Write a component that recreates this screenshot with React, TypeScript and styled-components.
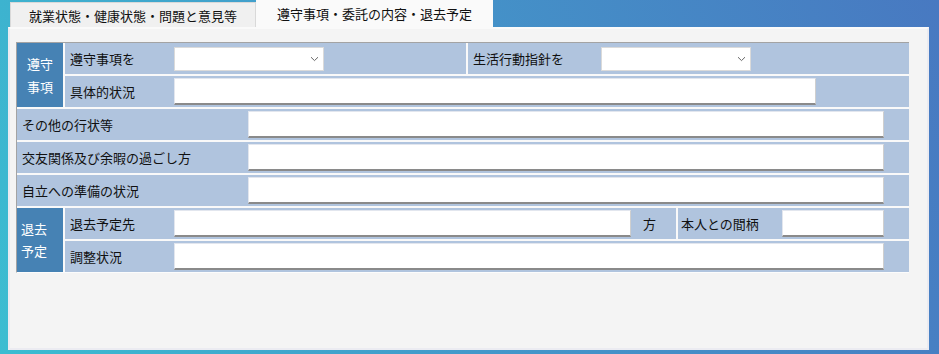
import React from "react";
import styled, { createGlobalStyle } from "styled-components";

const GlobalStyle = createGlobalStyle`
  html, body {
    margin: 0;
    padding: 0;
  }
  body {
    font-family: "Noto Sans CJK JP", "Noto Sans", sans-serif;
    font-size: 13px;
    color: #111;
  }
`;

const Page = styled("div")`
  width: 939px;
  height: 354px;
  overflow: hidden;
  background: linear-gradient(70deg, #3bbdd1 0%, #4398ca 45%, #4879c1 100%);
  display: flex;
  flex-direction: column;
`;

const TabBar = styled("div")`
  display: flex;
  align-items: flex-end;
  height: 27px;
  padding-left: 10px;
`;

const Tab = styled("div")<{ $active?: boolean }>`
  box-sizing: border-box;
  height: ${(p) => (p.$active ? 27 : 25)}px;
  padding: 0 ${(p) => (p.$active ? 20 : 18)}px;
  display: flex;
  align-items: center;
  line-height: 1;
  padding-bottom: ${(p) => (p.$active ? 2 : 0)}px;
  background: ${(p) => (p.$active ? "#fafafa" : "#f0f0f0")};
  border: 1px solid ${(p) => (p.$active ? "#fafafa" : "#d9d9d9")};
  border-bottom: none;
  color: #111;
  white-space: nowrap;
`;

const Panel = styled("div")`
  box-sizing: border-box;
  margin-left: 8px;
  width: 921px;
  height: 323px;
  background: #f4f4f4;
  border: 2px solid #ebebf1;
  border-top-color: #fafafa;
  padding: 13px 0 0 6px;
`;

const Form = styled("div")`
  width: 893px;
  display: flex;
  flex-direction: column;
  gap: 2px;
  background: #f9f9f9;
  border-top: 1px solid #a3a3a3;
  border-left: 1px solid #a3a3a3;
  border-bottom: 1px solid #fcfcfc;
  box-sizing: border-box;
`;

const Group = styled("div")`
  display: grid;
  grid-template-columns: 46px 1fr;
  grid-template-rows: 31px 31px;
  gap: 2px;
`;

const Side = styled("div")<{ $align: "center" | "left"; $lh: number }>`
  grid-row: span 2;
  background: #4682b4;
  color: #fff;
  display: flex;
  flex-direction: column;
  justify-content: center;
  align-items: ${(p) => (p.$align === "center" ? "center" : "flex-start")};
  padding-left: ${(p) => (p.$align === "center" ? 0 : 4)}px;
  line-height: ${(p) => p.$lh}px;
  padding-bottom: 1px;
`;

const Row = styled("div")`
  display: flex;
  gap: 2px;
  height: 31px;
`;

const Cell = styled("div")<{ $w?: number; $pl?: number }>`
  box-sizing: border-box;
  ${(p) => (p.$w ? `width: ${p.$w}px; flex: none;` : "flex: 1;")}
  background: #b0c4de;
  display: flex;
  align-items: center;
  padding-left: ${(p) => p.$pl ?? 5}px;
`;

const Label = styled("span")<{ $w?: number }>`
  flex: none;
  width: ${(p) => (p.$w ? `${p.$w}px` : "auto")};
  white-space: nowrap;
  line-height: 1;
  padding-bottom: 1px;
`;

const TextBox = styled("div")<{ $w: number }>`
  box-sizing: border-box;
  width: ${(p) => p.$w}px;
  height: 27px;
  background: #fff;
  border: 1px solid #e2e6ee;
  border-right-color: #cfcfcf;
  border-bottom: 2px solid #8a8a8a;
  flex: none;
`;

const SelectBox = styled("div")`
  box-sizing: border-box;
  width: 150px;
  height: 24px;
  background: #fff;
  border: 1px solid #dadada;
  display: flex;
  align-items: center;
  justify-content: flex-end;
  padding-right: 4px;
  flex: none;
`;

const Suffix = styled("span")`
  margin-left: 12px;
  line-height: 1;
`;

const Chevron = () => (
  <svg width="9" height="6" viewBox="0 0 9 6">
    <path d="M1 1.2 L4.5 4.6 L8 1.2" fill="none" stroke="#666" strokeWidth="1" />
  </svg>
);

const Select = () => (
  <SelectBox>
    <Chevron />
  </SelectBox>
);

const wideRows = ["その他の行状等", "交友関係及び余暇の過ごし方", "自立への準備の状況"];

export default function App() {
  return (
    <Page>
      <GlobalStyle />
      <TabBar>
        <Tab>就業状態・健康状態・問題と意見等</Tab>
        <Tab $active>遵守事項・委託の内容・退去予定</Tab>
      </TabBar>
      <Panel>
        <Form>
          <Group>
            <Side $align="center" $lh={23}>
              <span>遵守</span>
              <span>事項</span>
            </Side>
            <Row>
              <Cell $w={401}>
                <Label $w={104}>遵守事項を</Label>
                <Select />
              </Cell>
              <Cell>
                <Label $w={128}>生活行動指針を</Label>
                <Select />
              </Cell>
            </Row>
            <Row>
              <Cell>
                <Label $w={104}>具体的状況</Label>
                <TextBox $w={642} />
              </Cell>
            </Row>
          </Group>
          {wideRows.map((label) => (
            <Row key={label}>
              <Cell>
                <Label $w={226}>{label}</Label>
                <TextBox $w={636} />
              </Cell>
            </Row>
          ))}
          <Group>
            <Side $align="left" $lh={22}>
              <span>退去</span>
              <span>予定</span>
            </Side>
            <Row>
              <Cell $w={611}>
                <Label $w={104}>退去予定先</Label>
                <TextBox $w={457} />
                <Suffix>方</Suffix>
              </Cell>
              <Cell $pl={3}>
                <Label $w={101}>本人との間柄</Label>
                <TextBox $w={102} />
              </Cell>
            </Row>
            <Row>
              <Cell>
                <Label $w={104}>調整状況</Label>
                <TextBox $w={710} />
              </Cell>
            </Row>
          </Group>
        </Form>
      </Panel>
    </Page>
  );
}
